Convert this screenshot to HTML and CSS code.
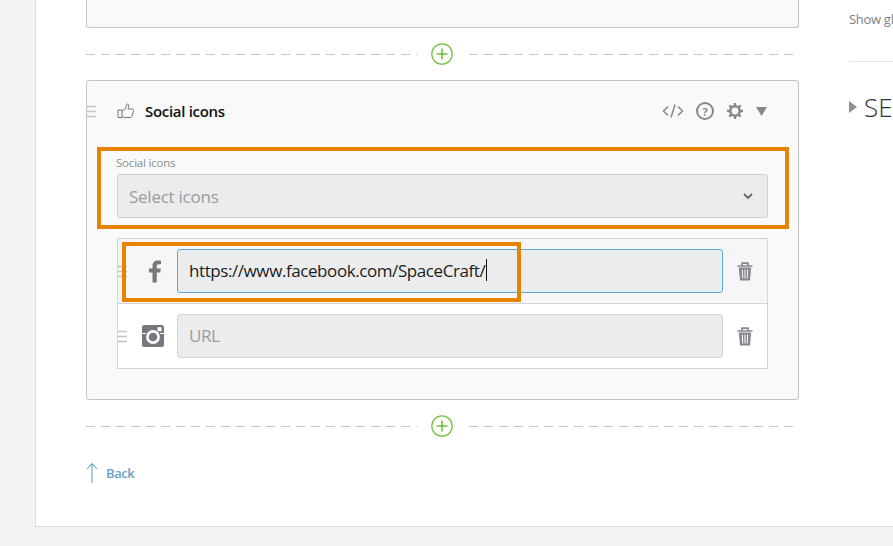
FILE: index.html
```html
<!DOCTYPE html>
<html lang="en">
<head>
<meta charset="utf-8">
<title>Social icons</title>
<link rel="stylesheet" href="styles.css">
</head>
<body>
<div class="panel">
  <main class="main">
    <div class="prev-card"></div>
    <div class="adder">
      <span class="dash"></span>
      <svg class="plus" width="24" height="24" viewBox="0 0 24 24"><circle cx="12" cy="12" r="10.2" fill="#fff" stroke="#6fbf3a" stroke-width="1.2"/><path d="M12 6.500v11M6.500 12h11" stroke="#6fbf3a" stroke-width="1.600" fill="none"/></svg>
      <span class="dash"></span>
    </div>
    <section class="card">
      <svg class="grip grip-head" width="9" height="13" viewBox="0 0 9 13"><path d="M0 1.500h9M0 6.500h9M0 11.500h9" stroke="#c4c4c4" stroke-width="1.600"/></svg>
      <header class="card-head">
        <svg class="thumb" width="18" height="16" viewBox="0 0 18 16"><path d="M1 7h4v7.500H1zM5 8l2.800-1.500L10.200 1c1.300-.4 1.900.6 1.600 1.800L11 6h4.600c1 0 1.300 .9 1 1.700l-1.800 5.800c-.2.700-.7 1-1.400 1H7.500L5 13.500" fill="none" stroke="#77797c" stroke-width="1"/></svg>
        <h2 class="card-title">Social icons</h2>
        <div class="tools">
          <svg width="22" height="16" viewBox="0 0 22 16"><path d="M6 3.500 1.500 8 6 12.500M16 3.500 20.500 8 16 12.500M13 1.500 9 14.500" fill="none" stroke="#85898e" stroke-width="1.500"/></svg>
          <span class="help">?</span>
          <svg width="18" height="18" viewBox="0 0 18 18"><circle cx="9" cy="9" r="4.700" fill="none" stroke="#85898e" stroke-width="2.600"/><path d="M9 1v3M9 14v3M1 9h3M14 9h3M3.300 3.300l2.200 2.200M12.500 12.500l2.200 2.200M3.300 14.700l2.200-2.200M12.500 5.500l2.200-2.200" stroke="#85898e" stroke-width="2.400"/></svg>
          <svg width="11" height="9" viewBox="0 0 11 9"><path d="M0 0h11L5.500 9z" fill="#85898e"/></svg>
        </div>
      </header>
      <div class="field">
        <label class="field-label">Social icons</label>
        <div class="select">
          <span>Select icons</span>
          <svg width="10" height="7" viewBox="0 0 10 7"><path d="M1 1l4 4 4-4" fill="none" stroke="#62666b" stroke-width="1.800"/></svg>
        </div>
      </div>
      <div class="rows">
        <div class="row row-active">
          <svg class="grip" width="9" height="13" viewBox="0 0 9 13"><path d="M0 1.500h9M0 6.500h9M0 11.500h9" stroke="#c4c4c4" stroke-width="1.600"/></svg>
          <svg class="net" width="24" height="24" viewBox="0 0 24 24"><path d="M11.500 23.500V13.500H8V9.500H11.500V7c0-3.600 2.200-5.500 5.400-5.500 1.300 0 2.600.1 3.100.2v3.600h-2.200c-1.600 0-2 .8-2 2v2.200h4l-.5 4h-3.500v10z" fill="#75797e"/></svg>
          <div class="input input-focus"><span>https://www.facebook.com/SpaceCraft/</span><i class="caret"></i></div>
          <svg class="trash" width="16" height="19" viewBox="0 0 16 19"><path d="M.5 4h15M5 3.500V1.200h6v2.300" fill="none" stroke="#85898e" stroke-width="1.700"/><path d="M1.800 5.500h12.400L13 18.500H3z" fill="#85898e"/><path d="M5.300 7.500l.5 9M8 7.500v9M10.700 7.500l-.5 9" stroke="#f7f7f7" stroke-width="1"/></svg>
        </div>
        <div class="row">
          <svg class="grip" width="9" height="13" viewBox="0 0 9 13"><path d="M0 1.500h9M0 6.500h9M0 11.500h9" stroke="#c4c4c4" stroke-width="1.600"/></svg>
          <svg class="net" width="24" height="24" viewBox="0 0 24 24"><rect x="1" y="1" width="22" height="22" rx="2.500" fill="#75797e"/><path d="M1 9.500h4M19 9.500h4" stroke="#fff" stroke-width="1"/><circle cx="12" cy="13" r="5.600" fill="#75797e" stroke="#fff" stroke-width="2.600"/><rect x="16.500" y="3.200" width="4" height="4" fill="#fff"/></svg>
          <div class="input placeholder"><span>URL</span></div>
          <svg class="trash" width="16" height="19" viewBox="0 0 16 19"><path d="M.5 4h15M5 3.500V1.200h6v2.300" fill="none" stroke="#85898e" stroke-width="1.700"/><path d="M1.800 5.500h12.400L13 18.500H3z" fill="#85898e"/><path d="M5.300 7.500l.5 9M8 7.500v9M10.700 7.500l-.5 9" stroke="#fff" stroke-width="1"/></svg>
        </div>
      </div>
      <div class="mark mark-select"></div>
      <div class="mark mark-input"></div>
    </section>
    <div class="adder">
      <span class="dash"></span>
      <svg class="plus" width="24" height="24" viewBox="0 0 24 24"><circle cx="12" cy="12" r="10.200" fill="#fff" stroke="#6fbf3a" stroke-width="1.200"/><path d="M12 6.500v11M6.500 12h11" stroke="#6fbf3a" stroke-width="1.600" fill="none"/></svg>
      <span class="dash"></span>
    </div>
    <a class="back" href="#">
      <svg width="12" height="22" viewBox="0 0 12 22"><path d="M6 21V1.500M1 7l5-5.500L11 7" fill="none" stroke="#6aa3c9" stroke-width="1.100"/></svg>
      <span>Back</span>
    </a>
  </main>
  <aside class="side">
    <p class="side-text">Show gl</p>
    <hr class="side-rule">
    <div class="side-head">
      <svg class="side-arrow" width="8" height="12" viewBox="0 0 8 12"><path d="M0 0l8 6-8 6z" fill="#8c9096"/></svg>
      <span>SE</span>
    </div>
  </aside>
</div>
</body>
</html>
```
FILE: styles.css
```css
* { box-sizing: border-box; }
html, body { margin: 0; height: 546px; overflow: hidden; }
body { background: #f3f3f3; font-family: "Open Sans", "Liberation Sans", sans-serif; }
.panel { margin-left: 35px; width: 858px; height: 527px; background: #fff; border-left: 1px solid #dedede; border-bottom: 1px solid #dedede; display: flex; overflow: hidden; }
.main { width: 763px; padding-left: 50px; flex: none; }
.prev-card { width: 713px; height: 28px; background: #f9f9f9; border: 1px solid #c4c4c4; border-top: 0; border-radius: 0 0 3px 3px; }
.adder { width: 713px; height: 52px; display: flex; align-items: center; gap: 14px; }
.dash { flex: 1; height: 1px; background: repeating-linear-gradient(90deg, #c6c6c6 0 9px, transparent 9px 15px); }
.plus { flex: none; margin-left: -1px; margin-right: 1px; }
.card { position: relative; width: 713px; height: 320px; background: #f9f9f9; border: 1px solid #c4c4c4; border-radius: 3px; padding: 0 30px; }
.grip { flex: none; }
.grip-head { position: absolute; left: 0; top: 24px; }
.card-head { height: 60px; display: flex; align-items: center; gap: 10px; }
.thumb { flex: none; }
.card-title { margin: 0; font-size: 15px; font-weight: 600; color: #111; letter-spacing: -.3px; }
.tools { margin-left: auto; margin-right: 1px; display: flex; align-items: center; gap: 12px; }
.help { width: 18px; height: 18px; border: 2px solid #85898e; border-radius: 50%; color: #85898e; font-size: 11px; font-weight: 700; display: flex; align-items: center; justify-content: center; }
.field { margin-top: 15px; }
.field-label { display: block; font-size: 11.500px; line-height: 14px; color: #8a8d91; letter-spacing: -.2px; margin-bottom: 4px; margin-left: -1px; }
.select { height: 44px; background: #ebeced; border: 1px solid #cfd0d2; border-radius: 3px; padding: 0 14px 0 11px; display: flex; align-items: center; justify-content: space-between; font-size: 17px; color: #9a9da0; letter-spacing: -.25px; }
.rows { margin-top: 20px; background: #fff; border: 1px solid #d4d4d4; }
.row { position: relative; height: 64px; display: flex; align-items: center; padding-right: 14px; }
.row + .row { border-top: 1px solid #d4d4d4; height: 65px; }
.row-active { background: #f6f6f6; }
.row > .grip { margin-right: 14px; }
.net { flex: none; margin-right: 12px; }
.input { width: 546px; height: 44px; margin-right: 14px; background: #ebeced; border: 1px solid #d2d3d5; border-radius: 3px; padding: 0 11px 2px; display: flex; align-items: center; font-size: 17px; color: #1c1c1c; letter-spacing: -.42px; }
.input-focus { border-color: #5aa9d6; }
.placeholder { color: #9a9da0; }
.caret { width: 1px; height: 22px; background: #111; margin-left: 1px; }
.trash { flex: none; }
.mark { position: absolute; border: 4px solid #e88300; pointer-events: none; }
.mark-select { left: 10px; top: 66px; width: 692px; height: 82px; }
.mark-input { left: 35px; top: 161px; width: 399px; height: 60px; }
.back { display: flex; align-items: center; gap: 8px; margin-top: 9px; color: #6a9fc9; font-size: 13px; font-weight: 600; text-decoration: none; height: 24px; letter-spacing: -.4px; }
.side { flex: none; width: 94px; padding-left: 50px; overflow: hidden; }
.side-text { margin: 10px 0 0; font-size: 13px; line-height: 18px; color: #7d8084; white-space: nowrap; letter-spacing: -.3px; }
.side-rule { margin: 33px 0 0; border: 0; border-top: 1px solid #e4e4e4; }
.side-head { margin-top: 28px; display: flex; align-items: center; gap: 7px; font-size: 26px; font-weight: 300; line-height: 34px; color: #2f3338; white-space: nowrap; }
.side-arrow { flex: none; }
```
